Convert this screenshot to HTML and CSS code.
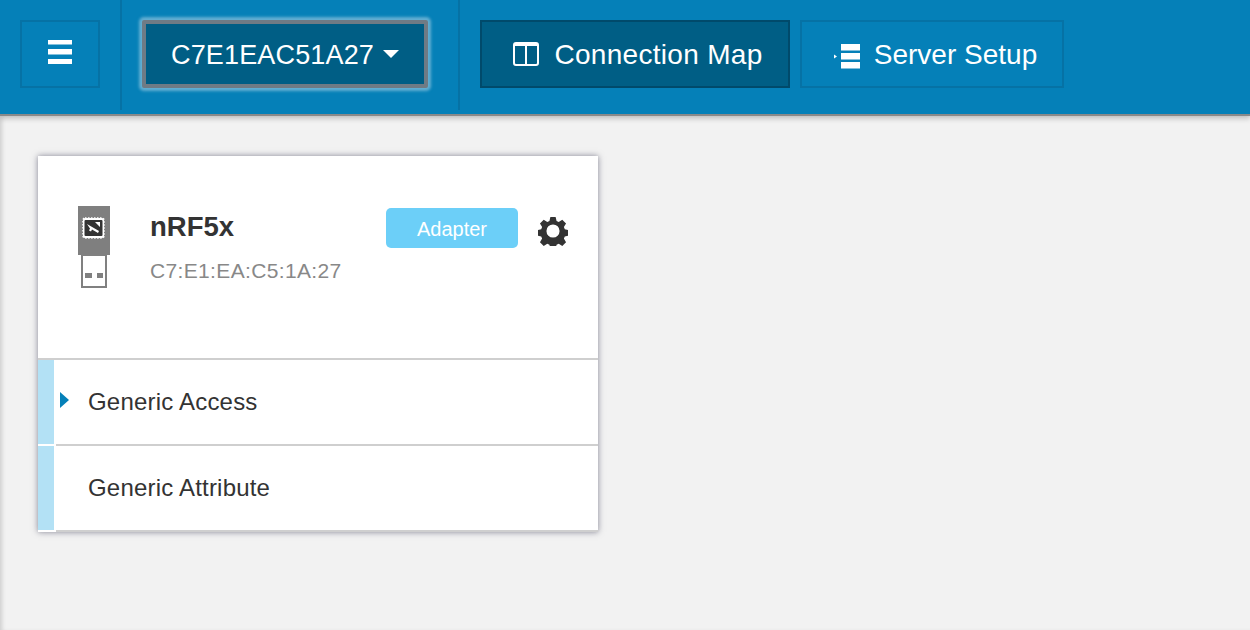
FILE: index.html
```html
<!DOCTYPE html>
<html lang="en">
<head>
<meta charset="utf-8">
<title>nRF Connect</title>
<link rel="stylesheet" href="styles.css">
</head>
<body>
<header class="navbar">
  <div class="nav-section nav-menu">
    <button class="btn" aria-label="Menu">
      <svg class="menu-icon" width="24" height="24" viewBox="0 0 24 24"><path fill="#fff" d="M0 0h24v4.500H0zM0 9h24v5.500H0zM0 19h24v5H0z"/></svg>
    </button>
  </div>
  <div class="nav-section nav-adapter">
    <button class="btn btn-adapter"><span class="label label-id">C7E1EAC51A27</span><span class="caret"></span></button>
  </div>
  <div class="nav-section nav-views">
    <button class="btn btn-view active">
      <svg width="26" height="24" viewBox="0 0 26 24"><rect x="1" y="1" width="24" height="22" rx="2" fill="none" stroke="#fff" stroke-width="2"/><path fill="#fff" d="M1 1h24v3H1zM12 3h2v19h-2z"/></svg>
      <span class="label">Connection Map</span>
    </button>
    <button class="btn btn-view">
      <svg class="setup-icon" width="27" height="26" viewBox="0 0 27 26"><path fill="#fff" d="M8 1h19v6.500H8zM8 10h19v6.500H8zM8 19h19v6.500H8zM1 11.500l3 2-3 2z"/></svg>
      <span class="label">Server Setup</span>
    </button>
  </div>
</header>
<main class="content">
  <section class="card">
    <div class="card-head">
      <svg class="dongle" width="32" height="84" viewBox="0 0 32 84">
        <rect width="32" height="49" fill="#7f7f7f"/>
        <rect x="5" y="12" width="21" height="20" rx="2" fill="#fff" stroke="#fff" stroke-width="1.500" stroke-dasharray="1.500 1.500"/>
        <rect x="6.500" y="14" width="18" height="16" rx="1" fill="#333"/>
        <path fill="#fff" d="M9 18l12 7-1 2-6-3.500-1 2-2-1 1-2zM17 16h5v5z"/>
        <rect x="4" y="49" width="24" height="32" fill="#fff" stroke="#808080" stroke-width="2"/>
        <path fill="#808080" d="M7 67h7v5H7zM19 67h6v5h-6z"/>
      </svg>
      <div class="device">
        <div class="device-name">nRF5x</div>
        <div class="device-addr">C7:E1:EA:C5:1A:27</div>
      </div>
      <span class="badge">Adapter</span>
      <svg class="gear" width="30" height="30" viewBox="0 0 32 32"><path fill="#333" fill-rule="evenodd" d="M13.200 1h5.600l1 4.300 2.300 1 3.800-2.300 4 4-2.300 3.800 1 2.300 4.300 1v5.800l-4.300 1-1 2.200 2.300 3.800-4 4-3.800-2.300-2.300 1-1 4.400h-5.600l-1-4.400-2.300-1-3.800 2.300-4-4 2.300-3.800-1-2.200-4.300-1v-5.800l4.300-1 1-2.300-2.300-3.800 4-4 3.800 2.300 2.300-1zM16 9a7 7 0 1 0 0 14 7 7 0 0 0 0-14z"/></svg>
    </div>
    <div class="svc">
      <div class="svc-bar"></div>
      <div class="svc-body"><span class="svc-arrow"></span>Generic Access</div>
    </div>
    <div class="svc">
      <div class="svc-bar"></div>
      <div class="svc-body">Generic Attribute</div>
    </div>
  </section>
</main>
</body>
</html>
```
FILE: styles.css
```css
* { box-sizing: border-box; }
html, body { margin: 0; height: 100%; overflow: hidden; }
body {
  display: flex;
  flex-direction: column;
  font-family: "Liberation Sans", Arial, sans-serif;
  background: #f2f2f2;
  color: #333;
}
.navbar {
  display: flex;
  height: 116px;
  flex: none;
  background: #0580b8;
  border-bottom: 2px solid #8a8a8a;
  box-shadow: 0 3px 5px rgba(0, 0, 0, .18);
  position: relative;
}
.nav-section { display: flex; height: 110px; padding-top: 20px; }
.nav-menu { width: 122px; padding-left: 20px; border-right: 2px solid #0672a5; }
.nav-adapter { width: 338px; padding-left: 20px; border-right: 2px solid #0672a5; }
.nav-views { padding-left: 20px; gap: 10px; }
.btn {
  display: flex;
  align-items: center;
  justify-content: center;
  height: 68px;
  width: 80px;
  padding: 0;
  font: 28px/1 "Liberation Sans", Arial, sans-serif;
  color: #fff;
  background: #0580b8;
  border: 2px solid #0672a5;
}
.menu-icon { margin-bottom: 4px; }
.label { padding-top: 2px; }
.label-id { font-size: 27px; letter-spacing: .15px; }
.btn-adapter {
  width: 286px;
  background: #005e85;
  border: 4px solid #6f7b85;
  box-shadow: 0 0 3px 3px rgba(150, 200, 225, .65);
  border-radius: 2px;
  gap: 9px;
}
.caret {
  border-top: 8px solid #fff;
  border-left: 8px solid transparent;
  border-right: 8px solid transparent;
}
.btn-view { width: 264px; gap: 15px; padding-left: 6px; }
.btn-view.active { width: 310px; background: #005e85; border-color: #004a6b; }
.btn-view.active .label { letter-spacing: .3px; }
.setup-icon { margin: 3px -1px 0 0; }
.content { flex: 1; padding: 40px 38px; box-shadow: inset 4px 0 4px -2px rgba(0, 0, 0, .15); }
.card {
  width: 560px;
  background: #fff;
  box-shadow: 0 0 6px rgba(40, 40, 70, .55);
}
.card-head {
  display: flex;
  align-items: flex-start;
  height: 204px;
  padding: 50px 29px 0 40px;
  border-bottom: 2px solid #cfcfcf;
}
.device { margin-left: 40px; width: 236px; padding-top: 5px; }
.device-name { font-size: 27.500px; font-weight: 700; line-height: 32px; }
.device-addr { margin-top: 15px; font-size: 21px; letter-spacing: .35px; line-height: 26px; color: #888; }
.badge {
  flex: none;
  width: 132px;
  height: 40px;
  margin-top: 2px;
  font-size: 20px;
  line-height: 42px;
  text-align: center;
  color: #fff;
  background: #6ccff8;
  border-radius: 5px;
}
.gear { flex: none; margin: 10px 0 0 20px; }
.svc { display: flex; height: 86px; }
.svc-bar { width: 16px; background: #b3e1f5; border-bottom: 2px solid #fff; }
.svc-body {
  flex: 1;
  position: relative;
  margin-left: 2px;
  padding: 0 0 0 32px;
  font-size: 24px;
  letter-spacing: .2px;
  line-height: 84px;
  border-bottom: 2px solid #cfcfcf;
}
.svc-arrow {
  position: absolute;
  left: 4px;
  top: 32px;
  border-left: 9px solid #0580b8;
  border-top: 8px solid transparent;
  border-bottom: 8px solid transparent;
}
```
